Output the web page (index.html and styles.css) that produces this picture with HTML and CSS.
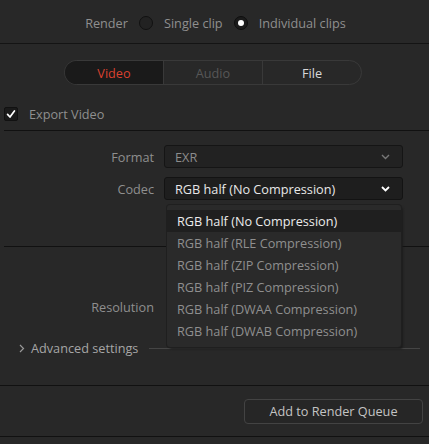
FILE: index.html
```html
<!DOCTYPE html>
<html>
<head>
<meta charset="utf-8">
<link rel="stylesheet" href="styles.css">
</head>
<body>
<div class="panel">
  <div class="render-row">
    <span class="lbl">Render</span>
    <span class="radio"></span>
    <span class="lbl">Single clip</span>
    <span class="radio on"><span class="dot"></span></span>
    <span class="lbl">Individual clips</span>
  </div>
  <div class="tabs">
    <div class="tab active">Video</div>
    <div class="tab dim">Audio</div>
    <div class="tab">File</div>
  </div>
  <div class="export-row">
    <span class="check"><svg width="14" height="14" viewBox="0 0 14 14"><path d="M3 7.5 L5.8 10.5 L11 3.5" fill="none" stroke="#fff" stroke-width="2" stroke-linecap="round" stroke-linejoin="round"/></svg></span>
    <span class="lbl">Export Video</span>
  </div>
  <div class="rule r1"></div>
  <div class="field f1">
    <span class="flabel">Format</span>
    <div class="select grey"><span>EXR</span><svg class="chev" width="9" height="6" viewBox="0 0 9 6"><path d="M1 1 L4.5 4.5 L8 1" fill="none" stroke="#777" stroke-width="1.4"/></svg></div>
  </div>
  <div class="field f2">
    <span class="flabel">Codec</span>
    <div class="select bright"><span>RGB half (No Compression)</span><svg class="chev" width="9" height="6" viewBox="0 0 9 6"><path d="M1 1 L4.5 4.5 L8 1" fill="none" stroke="#fff" stroke-width="1.8"/></svg></div>
  </div>
  <div class="rule r2"></div>
  <div class="field f3">
    <span class="flabel">Resolution</span>
  </div>
  <div class="adv-row">
    <svg class="adv-chev" width="6" height="9" viewBox="0 0 6 9"><path d="M1 1 L4.5 4.5 L1 8" fill="none" stroke="#999" stroke-width="1.2"/></svg>
    <span class="adv-lbl">Advanced settings</span>
    <span class="adv-line"></span>
  </div>
  <div class="rule full r3"></div>
  <div class="btn-row">
    <div class="btn">Add to Render Queue</div>
  </div>
  <div class="rule full r4"></div>

  <div class="menu">
    <div class="item sel">RGB half (No Compression)</div>
    <div class="item">RGB half (RLE Compression)</div>
    <div class="item">RGB half (ZIP Compression)</div>
    <div class="item">RGB half (PIZ Compression)</div>
    <div class="item">RGB half (DWAA Compression)</div>
    <div class="item">RGB half (DWAB Compression)</div>
  </div>
</div>
</body>
</html>
```
FILE: styles.css
```css
html, body {
  margin: 0;
  padding: 0;
  background: #282828;
}
body {
  font-family: "Open Sans", "Noto Sans", sans-serif;
  font-size: 12.7px;
  color: #8f8f8f;
  width: 429px;
  height: 444px;
  overflow: hidden;
}
.panel {
  position: relative;
  width: 429px;
  height: 444px;
}
.render-row {
  border-bottom: 1px solid #141414;
  display: flex;
  align-items: center;
  justify-content: center;
  gap: 11px;
  padding-top: 2px;
  box-sizing: border-box;
  height: 44px;
  padding-left: 2px;
}
.lbl { color: #8f8f8f; line-height: 18px; }
.radio {
  width: 12px;
  height: 12px;
  border-radius: 50%;
  border: 1px solid #111;
  background: #222;
  display: flex;
  align-items: center;
  justify-content: center;
}
.radio.on { background: #1b1b1b; border-color: #0e0e0e; }
.radio .dot {
  width: 6px;
  height: 6px;
  border-radius: 50%;
  background: #fff;
}
.tabs {
  margin: 16px 0 0 64px;
  width: 298px;
  height: 25px;
  display: flex;
  border: 1px solid #393939;
  border-radius: 13px;
  box-sizing: border-box;
  overflow: hidden;
}
.tab {
  flex: 1;
  display: flex;
  align-items: center;
  justify-content: center;
  color: #d8d8d8;
  border-left: 1px solid #393939;
}
.tab:first-child { border-left: none; }
.tab.active { background: #1a1a1a; color: #d9412f; }
.tab.dim { color: #575757; }
.export-row {
  height: 30px;
  margin-top: 14px;
  display: flex;
  align-items: center;
  padding-left: 4px;
  gap: 11px;
}
.check {
  width: 14px;
  height: 14px;
  border-radius: 2px;
  background: #1a1a1a;
  box-sizing: border-box;
  border: 1px solid #111;
  display: flex;
  align-items: center;
  justify-content: center;
}
.check svg { display: block; }
.rule {
  height: 1px;
  background: #111;
  margin-left: 4px;
}
.rule.r1 { margin-top: 1px; }
.rule.full { margin-left: 0; }
.field {
  display: flex;
  align-items: center;
  height: 23px;
}
.f1 { margin-top: 14px; }
.f2 { margin-top: 9px; }
.flabel {
  width: 154px;
  text-align: right;
  color: #8f8f8f;
}
.select {
  margin-left: 10px;
  width: 239px;
  height: 23px;
  box-sizing: border-box;
  border: 1px solid #151515;
  border-radius: 3px;
  background: #222;
  display: flex;
  align-items: center;
  padding: 0 12px 0 10px;
  justify-content: space-between;
}
.select.grey span { color: #8c8c8c; }
.select.bright { background: #1e1e1e; border-color: #131313; }
.select.bright span { color: #e8e8e8; }
.chev { display: block; }
.r2 { margin-top: 46px; }
.f3 { margin-top: 48px; }
.adv-row {
  display: flex;
  align-items: center;
  height: 20px;
  margin-top: 20px;
  padding-left: 19px;
}
.adv-chev { display: block; margin-right: 6px; }
.adv-lbl { color: #a6a6a6; }
.adv-line {
  flex: none;
  width: 271px;
  height: 1px;
  background: #454545;
  margin-left: 11px;
}
.r3 { margin-top: 27px; }
.btn-row {
  height: 50px;
  display: flex;
  align-items: center;
  justify-content: flex-end;
  padding-right: 6px;
}
.btn {
  width: 179px;
  height: 25px;
  box-sizing: border-box;
  border: 1px solid #434343;
  border-radius: 4px;
  display: flex;
  align-items: center;
  justify-content: center;
  color: #c4c4c4;
  background: #262626;
}
.menu {
  position: absolute;
  left: 167px;
  top: 205px;
  width: 234px;
  height: 142px;
  box-sizing: border-box;
  background: #2a2a2a;
  border-radius: 3px;
  padding-top: 5px;
  box-shadow: 0 0 0 1px #1f1f1f, 2px 2px 2px #1c1c1c;
}
.item {
  height: 22px;
  line-height: 22px;
  padding-left: 10px;
  color: #8f8f8f;
}
.item.sel { background: #1f1f1f; color: #ececec; }
```
